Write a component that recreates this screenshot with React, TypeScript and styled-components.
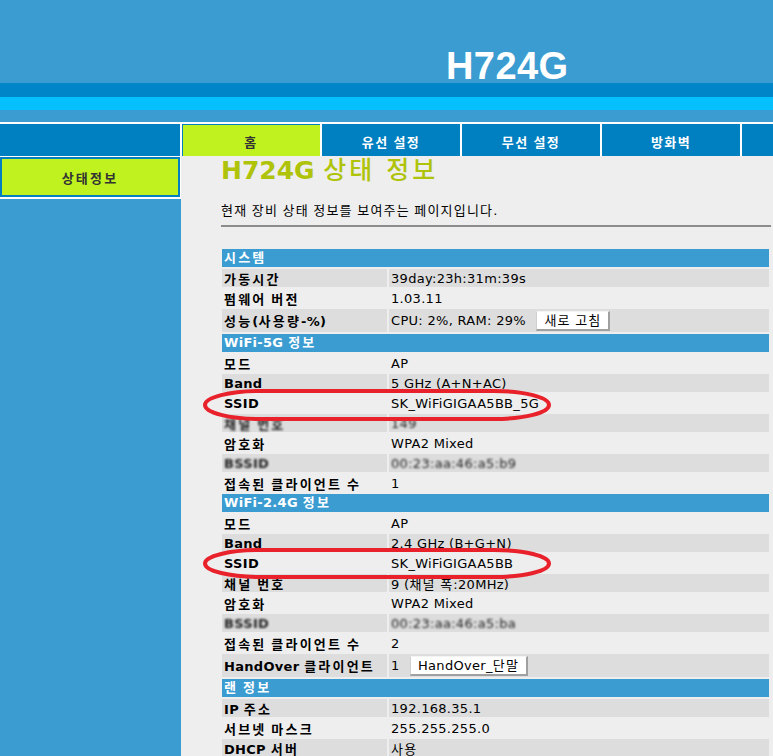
import React from 'react'
import styled, { createGlobalStyle } from 'styled-components'

const GlobalStyle = createGlobalStyle`
  html, body {
    margin: 0;
    padding: 0;
    background: #eeeeee;
  }
  body {
    font-family: "DejaVu Sans", "Noto Sans CJK KR", sans-serif;
    font-size: 13px;
    letter-spacing: 0.3px;
    color: #000;
    overflow: hidden;
  }
`

// hangul runs are set a little wider, like the bitmap gulim of the original
const Ko = styled.span`
  letter-spacing: 1.2px;
`

function ko(text: string) {
  return (
    <span>
      {text
        .split(/([\uAC00-\uD7A3]+)/)
        .map((part, i) => (i % 2 ? <Ko key={i}>{part}</Ko> : part))}
    </span>
  )
}

const Page = styled.div`
  display: flex;
  flex-direction: column;
  width: 773px;
  min-height: 756px;
`

const Top = styled.div`
  box-sizing: border-box;
  height: 83px;
  padding: 47px 0 0 446px;
  background: #3b9cd1;
`

const Logo = styled.div`
  font-family: "Liberation Sans", Arial, sans-serif;
  font-weight: bold;
  font-size: 38px;
  line-height: 38px;
  letter-spacing: 0.4px;
  color: #fff;
`

const Stripe = styled.div<{ $h: number; $c: string }>`
  height: ${p => p.$h}px;
  background: ${p => p.$c};
`

const Nav = styled.div`
  display: flex;
  gap: 2px;
  height: 32px;
  background: #fff;
`

const NavSpacer = styled.div`
  width: 180px;
  background: #0080c0;
`

const Tab = styled.div<{ $active?: boolean; $grow?: boolean }>`
  display: flex;
  align-items: center;
  justify-content: center;
  padding-top: 3px;
  box-sizing: border-box;
  width: ${p => (p.$grow ? 'auto' : '138px')};
  flex: ${p => (p.$grow ? '1' : 'none')};
  background: ${p => (p.$active ? '#c0f21f' : '#0080c0')};
  box-shadow: ${p => (p.$active ? 'inset 0 1px 0 #0080c0, inset 1px 0 0 #0080c0' : 'none')};
  color: ${p => (p.$active ? '#333' : '#fff')};
  font-weight: bold;
  font-size: 13px;
  ${Ko} {
    letter-spacing: 1.4px;
  }
`

const Body = styled.div`
  flex: 1;
  display: grid;
  grid-template-columns: 181px 1fr;
`

const Sidebar = styled.div`
  background: #3b9cd1;
`

const SideTop = styled.div`
  background: #fff;
  padding: 1px 1px 2px 0;
`

const SideItem = styled.div`
  height: 36px;
  border: 2px solid #0080c0;
  background: #c0f21f;
  display: flex;
  align-items: center;
  justify-content: center;
  font-weight: bold;
  color: #333;
  ${Ko} {
    letter-spacing: 2.2px;
  }
`

const Main = styled.div`
  background: #eeeeee;
  padding: 0 2px 0 40px;
`

const Title = styled.h1`
  margin: 0;
  font-size: 25px;
  line-height: 30px;
  font-weight: bold;
  letter-spacing: 0;
  color: #afc30b;
  span {
    font-weight: 500;
    letter-spacing: 3px;
  }
`

const Desc = styled.p`
  margin: 17px 0 0;
  line-height: 16px;
  font-size: 13px;
`

const Rule = styled.div`
  margin-top: 6px;
  height: 2px;
  background: #8c8c8c;
`

const TableWrap = styled.div`
  position: relative;
  margin: 22px 2px 0 1px;
`

const Grid = styled.div`
  display: grid;
  grid-template-columns: 165px 1fr;
  gap: 2px;
`

const SectionHead = styled.div`
  grid-column: 1 / -1;
  height: 18px;
  line-height: 18px;
  padding-left: 2px;
  background: #3b9cd1;
  color: #fff;
  font-weight: bold;
  ${Ko} {
    letter-spacing: 2.2px;
  }
`

const Cell = styled.div<{ $alt?: boolean; $tall?: boolean; $label?: boolean }>`
  display: flex;
  align-items: center;
  height: ${p => (p.$tall ? 23 : 18)}px;
  padding-left: 2px;
  background: ${p => (p.$alt ? '#dddddd' : 'transparent')};
  font-weight: ${p => (p.$label ? 'bold' : 'normal')};
  white-space: pre;
  ${Ko} {
    letter-spacing: ${p => (p.$label ? 2.2 : 1.2)}px;
  }
`

const Blur = styled.span`
  filter: blur(0.9px);
  color: #222;
`

const Btn = styled.span`
  margin-left: 6px;
  height: 17px;
  line-height: 17px;
  padding: 0 7px;
  background: #fff;
  border-top: 1px solid #f4f4f4;
  border-left: 1px solid #d0d0d0;
  border-right: 2px solid #a0a0a0;
  border-bottom: 2px solid #a0a0a0;
`

const Marks = styled.svg`
  position: absolute;
  left: 0;
  top: 0;
  overflow: visible;
  pointer-events: none;
`

type Row = {
  label: string
  value: React.ReactNode
  alt?: boolean
  blur?: boolean
  tall?: boolean
}

type Section = { title: string; rows: Row[] }

const sections: Section[] = [
  {
    title: '시스템',
    rows: [
      { label: '가동시간', value: '39day:23h:31m:39s', alt: true },
      { label: '펌웨어 버전', value: '1.03.11' },
      {
        label: '성능(사용량-%)',
        value: (
          <>
            {'CPU: 2%, RAM: 29% '}
            <Btn>{ko('새로 고침')}</Btn>
          </>
        ),
        alt: true,
        tall: true,
      },
    ],
  },
  {
    title: 'WiFi-5G 정보',
    rows: [
      { label: '모드', value: 'AP' },
      { label: 'Band', value: '5 GHz (A+N+AC)', alt: true },
      { label: 'SSID', value: 'SK_WiFiGIGAA5BB_5G' },
      { label: '채널 번호', value: '149', alt: true, blur: true },
      { label: '암호화', value: 'WPA2 Mixed' },
      { label: 'BSSID', value: '00:23:aa:46:a5:b9', alt: true, blur: true },
      { label: '접속된 클라이언트 수', value: '1' },
    ],
  },
  {
    title: 'WiFi-2.4G 정보',
    rows: [
      { label: '모드', value: 'AP' },
      { label: 'Band', value: '2.4 GHz (B+G+N)', alt: true },
      { label: 'SSID', value: 'SK_WiFiGIGAA5BB' },
      { label: '채널 번호', value: '9 (채널 폭:20MHz)', alt: true },
      { label: '암호화', value: 'WPA2 Mixed' },
      { label: 'BSSID', value: '00:23:aa:46:a5:ba', alt: true, blur: true },
      { label: '접속된 클라이언트 수', value: '2' },
      {
        label: 'HandOver 클라이언트',
        value: (
          <>
            {'1 '}
            <Btn>HandOver_{ko('단말')}</Btn>
          </>
        ),
        alt: true,
        tall: true,
      },
    ],
  },
  {
    title: '랜 정보',
    rows: [
      { label: 'IP 주소', value: '192.168.35.1', alt: true },
      { label: '서브넷 마스크', value: '255.255.255.0' },
      { label: 'DHCP 서버', value: '사용', alt: true },
    ],
  },
]

function text(v: React.ReactNode) {
  return typeof v === 'string' ? ko(v) : v
}

function StatusTable() {
  return (
    <TableWrap>
      <Grid>
        {sections.map(s => (
          <React.Fragment key={s.title}>
            <SectionHead>{ko(s.title)}</SectionHead>
            {s.rows.map((r, i) => (
              <React.Fragment key={i}>
                <Cell $label $alt={r.alt} $tall={r.tall}>
                  {r.blur ? <Blur>{ko(r.label)}</Blur> : ko(r.label)}
                </Cell>
                <Cell $alt={r.alt} $tall={r.tall}>
                  {r.blur ? <Blur>{text(r.value)}</Blur> : text(r.value)}
                </Cell>
              </React.Fragment>
            ))}
          </React.Fragment>
        ))}
      </Grid>
      {/* red marker loops drawn around the SSID rows */}
      <Marks width="1" height="1">
        <rect x="-17" y="142" width="344" height="28" rx="55" ry="14" fill="none" stroke="#e8212b" strokeWidth="4" />
        <rect x="-17" y="301" width="344" height="27" rx="55" ry="13.5" fill="none" stroke="#e8212b" strokeWidth="4" />
      </Marks>
    </TableWrap>
  )
}

export default function App() {
  return (
    <Page>
      <GlobalStyle />
      <Top>
        <Logo>H724G</Logo>
      </Top>
      <Stripe $h={14} $c="#0085c9" />
      <Stripe $h={13} $c="#05bfff" />
      <Stripe $h={12} $c="#3b9cd1" />
      <Stripe $h={2} $c="#ffffff" />
      <Nav>
        <NavSpacer />
        <Tab $active>{ko('홈')}</Tab>
        <Tab>{ko('유선 설정')}</Tab>
        <Tab>{ko('무선 설정')}</Tab>
        <Tab>{ko('방화벽')}</Tab>
        <Tab $grow />
      </Nav>
      <Body>
        <Sidebar>
          <SideTop>
            <SideItem>{ko('상태정보')}</SideItem>
          </SideTop>
        </Sidebar>
        <Main>
          <Title>
            H724G <span>상태 정보</span>
          </Title>
          <Desc>{ko('현재 장비 상태 정보를 보여주는 페이지입니다.')}</Desc>
          <Rule />
          <StatusTable />
        </Main>
      </Body>
    </Page>
  )
}
